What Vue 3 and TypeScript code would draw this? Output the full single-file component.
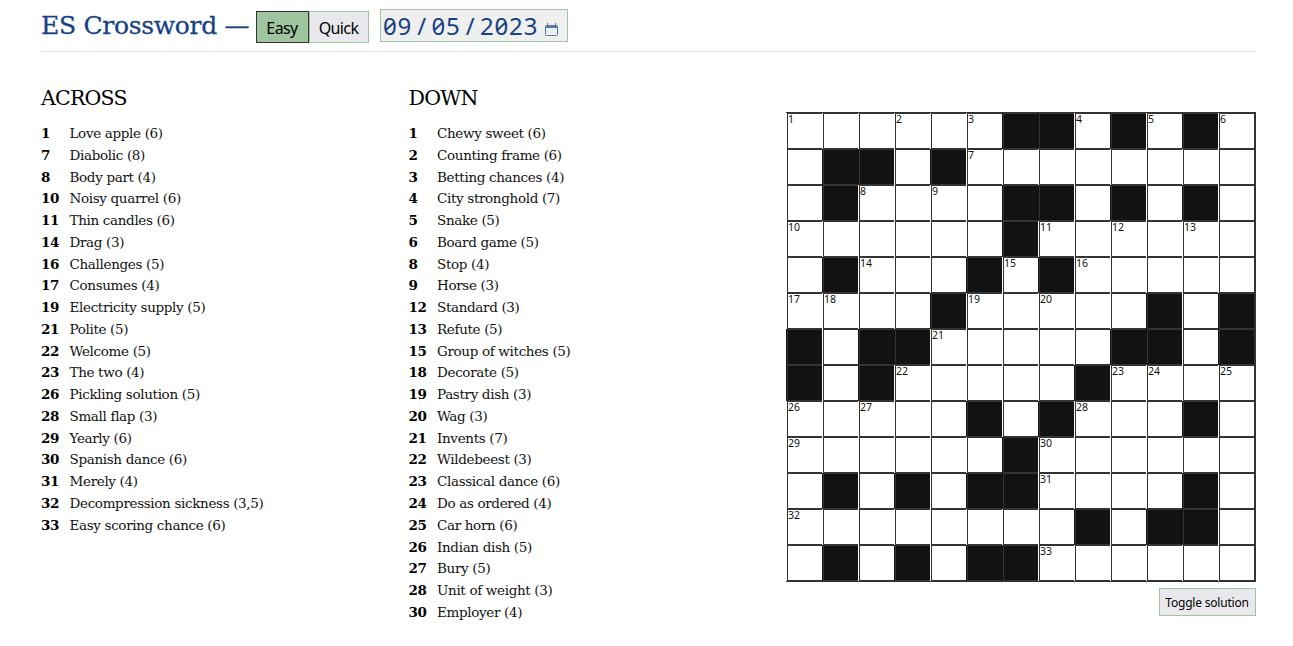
<script setup lang="ts">
import { ref } from 'vue'

type Clue = [number, string]

const across: Clue[] = [
  [1, 'Love apple (6)'], [7, 'Diabolic (8)'], [8, 'Body part (4)'], [10, 'Noisy quarrel (6)'],
  [11, 'Thin candles (6)'], [14, 'Drag (3)'], [16, 'Challenges (5)'], [17, 'Consumes (4)'],
  [19, 'Electricity supply (5)'], [21, 'Polite (5)'], [22, 'Welcome (5)'], [23, 'The two (4)'],
  [26, 'Pickling solution (5)'], [28, 'Small flap (3)'], [29, 'Yearly (6)'], [30, 'Spanish dance (6)'],
  [31, 'Merely (4)'], [32, 'Decompression sickness (3,5)'], [33, 'Easy scoring chance (6)'],
]
const down: Clue[] = [
  [1, 'Chewy sweet (6)'], [2, 'Counting frame (6)'], [3, 'Betting chances (4)'], [4, 'City stronghold (7)'],
  [5, 'Snake (5)'], [6, 'Board game (5)'], [8, 'Stop (4)'], [9, 'Horse (3)'], [12, 'Standard (3)'],
  [13, 'Refute (5)'], [15, 'Group of witches (5)'], [18, 'Decorate (5)'], [19, 'Pastry dish (3)'],
  [20, 'Wag (3)'], [21, 'Invents (7)'], [22, 'Wildebeest (3)'], [23, 'Classical dance (6)'],
  [24, 'Do as ordered (4)'], [25, 'Car horn (6)'], [26, 'Indian dish (5)'], [27, 'Bury (5)'],
  [28, 'Unit of weight (3)'], [30, 'Employer (4)'],
]
const lists = [
  { title: 'ACROSS', clues: across },
  { title: 'DOWN', clues: down },
]

// '#' is a blocked square, '.' an open one
const layout = [
  '......##.#.#.',
  '.##.#........',
  '.#....##.#.#.',
  '......#......',
  '.#...#.#.....',
  '....#.....#.#',
  '#.##.....##.#',
  '#.#.....#....',
  '.....#.#...#.',
  '......#......',
  '.#.#.##....#.',
  '........#.##.',
  '.#.#.##......',
]

const open = (r: number, c: number) => layout[r]?.[c] === '.'
let count = 0
const rows = layout.map((row, r) =>
  [...row].map((_, c) => {
    const starts =
      open(r, c) &&
      ((!open(r, c - 1) && open(r, c + 1)) || (!open(r - 1, c) && open(r + 1, c)))
    return { block: !open(r, c), label: starts ? String(++count) : '' }
  }),
)

const level = ref('Easy')
</script>

<template>
  <main class="page">
    <header class="top">
      <h1>ES Crossword —</h1>
      <div class="levels">
        <button
          v-for="name in ['Easy', 'Quick']"
          :key="name"
          :class="{ active: level === name }"
          @click="level = name"
        >{{ name }}</button>
      </div>
      <div class="date">
        <span class="digits">09</span><span class="sep">/</span><span class="digits">05</span><span class="sep">/</span><span class="digits">2023</span>
        <svg width="13" height="13" viewBox="0 0 13 13" fill="none" stroke="#567aa8">
          <rect x="0.5" y="2.5" width="12" height="10" rx="1" />
          <path d="M1 3.5h11M1 4.5h11" />
          <path d="M2.5 0v2M10.5 0v2" />
        </svg>
      </div>
    </header>

    <div class="content">
      <section v-for="list in lists" :key="list.title" class="list">
        <h2>{{ list.title }}</h2>
        <div v-for="[num, text] in list.clues" :key="num" class="clue">
          <b>{{ num }}</b><span>{{ text }}</span>
        </div>
      </section>
      <section class="board">
        <div class="grid">
          <template v-for="(row, r) in rows" :key="r">
            <div v-for="(cell, c) in row" :key="c" class="cell" :class="{ block: cell.block }">
              <div class="face">{{ cell.label }}</div>
            </div>
          </template>
        </div>
        <button class="toggle">Toggle solution</button>
      </section>
    </div>
  </main>
</template>

<style>
body {
  margin: 0;
  background: #fff;
}
</style>

<style scoped>
.page {
  box-sizing: border-box;
  height: 646px;
  padding: 0 37px 0 41px;
  overflow: hidden;
  color: #111;
  font-family: 'DejaVu Serif', serif;
}
.top {
  display: flex;
  box-sizing: border-box;
  height: 52px;
  padding-top: 9px;
  border-bottom: 1px solid #ddd;
}
h1 {
  width: 215px;
  margin: 0;
  color: #154284;
  font-size: 25px;
  font-weight: 400;
  letter-spacing: -0.3px;
  line-height: 33px;
  white-space: nowrap;
  -webkit-text-stroke: 0.3px #154284;
}
button {
  box-sizing: border-box;
  margin: 0;
  padding: 0;
  border: 1px solid #9fc59f;
  border-radius: 0;
  background: #e9e9ed;
  color: #000;
  font-family: 'Noto Sans', sans-serif;
}
.levels {
  display: flex;
  margin-top: 2px;
}
.levels button {
  width: 60px;
  height: 32px;
  padding: 2px 1px 0 0;
  font-size: 16px;
  letter-spacing: -0.6px;
}
.levels .active {
  width: 53px;
  border-color: #333;
  background: #9fc59f;
}
.date {
  display: flex;
  box-sizing: border-box;
  width: 188px;
  height: 33px;
  margin-left: 11px;
  padding-left: 2px;
  border: 1px solid #9fc59f;
  background: #efefef;
  color: #154284;
  font-family: 'Noto Sans', sans-serif;
  font-size: 24px;
  font-feature-settings: 'zero';
  line-height: 31px;
}
.digits {
  letter-spacing: 0.85px;
}
.sep {
  width: 19.3px;
  text-align: center;
}
.date svg {
  margin: 13px 0 0 6.5px;
}
.content {
  display: flex;
}
.list {
  width: 367.5px;
}
h2 {
  margin: 33px 0 11px;
  color: #000;
  font-size: 20.5px;
  font-weight: 400;
  letter-spacing: -0.8px;
  line-height: 27px;
}
.clue {
  display: flex;
  font-size: 13.5px;
  line-height: 21.77px;
  letter-spacing: -0.34px;
  white-space: nowrap;
}
.clue b {
  width: 28.5px;
  color: #000;
}
.board {
  display: flex;
  flex-direction: column;
  align-items: flex-end;
  margin: 60px 0 0 auto;
}
.grid {
  display: grid;
  grid-template-columns: repeat(13, 36px);
  grid-auto-rows: 36px;
  padding: 1px 2px 1px 0;
  background: #333;
}
.cell {
  padding-left: 1px;
  background: #fff;
}
.face {
  box-sizing: border-box;
  height: 36px;
  border: solid #333;
  border-width: 1px 0 1px 1px;
  font-family: 'Noto Sans', sans-serif;
  font-size: 10.5px;
  line-height: 11px;
}
.block {
  background: #121212;
}
.toggle {
  width: 97px;
  height: 28px;
  margin-top: 6px;
  padding-right: 1px;
  font-size: 12px;
  letter-spacing: -0.2px;
}
</style>
